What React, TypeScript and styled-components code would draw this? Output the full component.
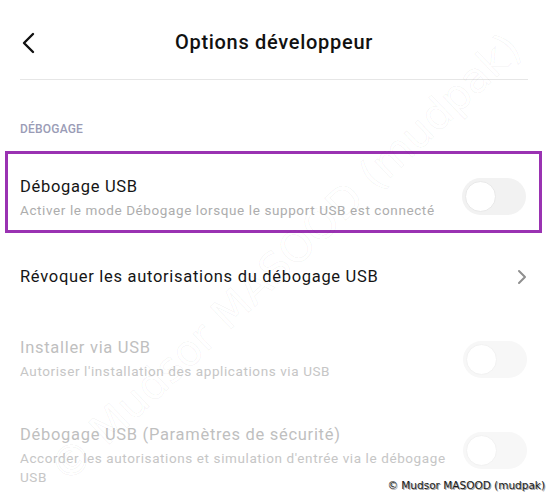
import React from "react";
import styled, { createGlobalStyle } from "styled-components";

const Global = createGlobalStyle`
  html, body { margin: 0; padding: 0; background: #ffffff; }
  body { font-family: Roboto, "Noto Sans", Arial, sans-serif; -webkit-font-smoothing: antialiased; }
`;

const Page = styled.div`
  position: relative;
  width: 548px;
  height: 500px;
  overflow: hidden;
  background: #fff;
`;

const Header = styled.header`
  height: 80px;
  margin: 0 20px;
  display: flex;
  align-items: center;
  justify-content: center;
  position: relative;
  border-bottom: 1px solid #e6e6e6;
  padding-top: 4px;
  box-sizing: border-box;
`;

const BackButton = styled.button`
  position: absolute;
  left: 0;
  top: 31px;
  width: 16px;
  height: 24px;
  border: 0;
  padding: 0;
  background: none;
  display: flex;
`;

const Title = styled.h1`
  margin: 0;
  font-size: 20px;
  font-weight: 500;
  color: #111;
  letter-spacing: 0.7px;
`;

const SectionLabel = styled.div`
  margin: 41px 20px 14px;
  height: 16px;
  line-height: 16px;
  font-size: 12px;
  font-weight: 500;
  color: #9a9cb6;
  letter-spacing: 0.2px;
`;

const Item = styled.div<{ $h: number; $highlight?: boolean }>`
  display: flex;
  align-items: center;
  justify-content: space-between;
  height: ${(p) => p.$h}px;
  box-sizing: border-box;
  padding: ${(p) => (p.$highlight ? "8px 13px 0 12px" : "0 21px 0 20px")};
  margin: ${(p) => (p.$highlight ? "0 6px 0 5px" : "0")};
  border: ${(p) => (p.$highlight ? "3px solid #9a32b2" : "none")};
`;

const Texts = styled.div<{ $shift?: number }>`
  display: flex;
  flex-direction: column;
  max-width: 432px;
  margin-top: ${(p) => p.$shift ?? 0}px;
`;

const ItemTitle = styled.div<{ $disabled?: boolean }>`
  font-size: 16.5px;
  line-height: 22px;
  letter-spacing: 0.7px;
  color: ${(p) => (p.$disabled ? "#bfbfbf" : "#151515")};
`;

const ItemSub = styled.div<{ $disabled?: boolean }>`
  font-size: 13.5px;
  line-height: 19px;
  margin-top: 3px;
  letter-spacing: 0.6px;
  color: ${(p) => (p.$disabled ? "#c6c6c6" : "#adadad")};
`;

const Toggle = styled.div<{ $disabled?: boolean; $lift?: number }>`
  flex: none;
  width: 64px;
  height: 37px;
  border-radius: 19px;
  background: ${(p) => (p.$disabled ? "#f7f7f7" : "#f2f2f2")};
  display: flex;
  align-items: center;
  padding-left: 3px;
  box-sizing: border-box;
  margin-bottom: ${(p) => p.$lift ?? 0}px;
`;

const Knob = styled.div<{ $disabled?: boolean }>`
  width: 31px;
  height: 31px;
  border-radius: 50%;
  background: #fff;
  box-sizing: border-box;
  border: 1px solid ${(p) => (p.$disabled ? "#f2f2f2" : "#e9e9e9")};
`;

const Watermark = styled.div`
  position: absolute;
  left: 285px;
  top: 258px;
  transform: translate(-50%, -50%) rotate(-43.5deg);
  white-space: nowrap;
  font-family: "DejaVu Sans", sans-serif;
  font-size: 42px;
  color: rgba(0, 0, 0, 0.01);
  -webkit-text-stroke: 1px rgba(0, 0, 0, 0.045);
  pointer-events: none;
`;

const Credit = styled.div`
  position: absolute;
  right: 3px;
  bottom: 9px;
  font-family: "DejaVu Sans", sans-serif;
  font-size: 10.5px;
  color: #1a1a1a;
  text-shadow: 1px 1px 0 #9a9a9a;
  background: rgba(255, 255, 255, 0.7);
`;

const Chevron = () => (
  <svg width="10" height="16" viewBox="0 0 10 16" fill="none">
    <path d="M2 2l6 6-6 6" stroke="#8f8f8f" strokeWidth="2" strokeLinecap="round" strokeLinejoin="round" />
  </svg>
);

const BackIcon = () => (
  <svg width="16" height="24" viewBox="0 0 16 24" fill="none">
    <path d="M13 3L4 12l9 9" stroke="#111" strokeWidth="2.4" strokeLinecap="round" strokeLinejoin="round" />
  </svg>
);

export default function App() {
  return (
    <Page>
      <Global />
      <Header>
        <BackButton aria-label="Retour">
          <BackIcon />
        </BackButton>
        <Title>Options développeur</Title>
      </Header>

      <SectionLabel>DÉBOGAGE</SectionLabel>

      <Item $h={82} $highlight>
        <Texts $shift={3}>
          <ItemTitle>Débogage USB</ItemTitle>
          <ItemSub>Activer le mode Débogage lorsque le support USB est connecté</ItemSub>
        </Texts>
        <Toggle>
          <Knob />
        </Toggle>
      </Item>

      <Item $h={88}>
        <Texts>
          <ItemTitle>Révoquer les autorisations du débogage USB</ItemTitle>
        </Texts>
        <Chevron />
      </Item>

      <Item $h={76}>
        <Texts>
          <ItemTitle $disabled>Installer via USB</ItemTitle>
          <ItemSub $disabled>Autoriser l'installation des applications via USB</ItemSub>
        </Texts>
        <Toggle $disabled>
          <Knob $disabled />
        </Toggle>
      </Item>

      <Item $h={116}>
        <Texts>
          <ItemTitle $disabled>Débogage USB (Paramètres de sécurité)</ItemTitle>
          <ItemSub $disabled>Accorder les autorisations et simulation d'entrée via le débogage USB</ItemSub>
        </Texts>
        <Toggle $disabled $lift={9}>
          <Knob $disabled />
        </Toggle>
      </Item>

      <Watermark>© Mudsor MASOOD (mudpak)</Watermark>
      <Credit>© Mudsor MASOOD (mudpak)</Credit>
    </Page>
  );
}
